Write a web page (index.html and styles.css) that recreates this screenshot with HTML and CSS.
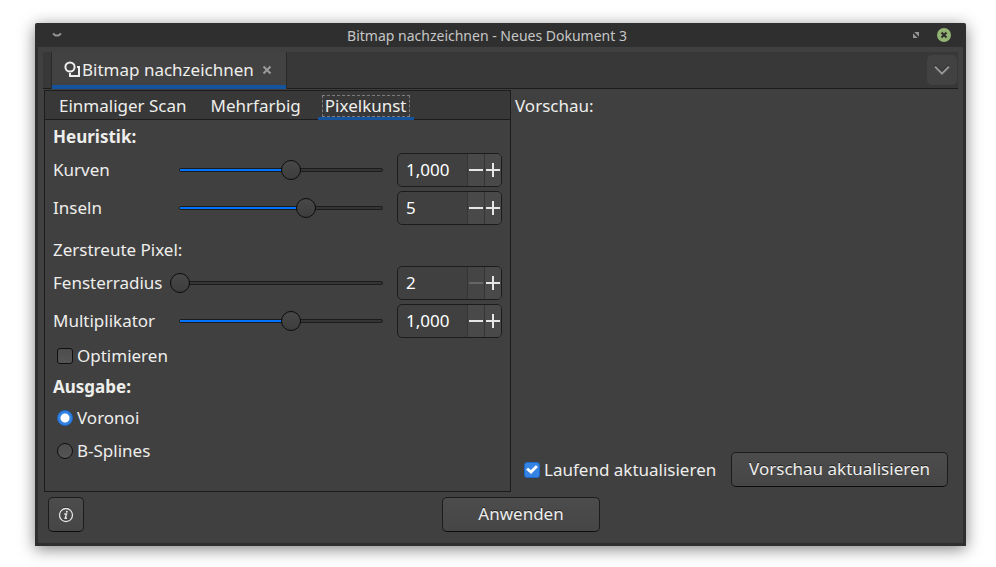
FILE: index.html
```html
<!DOCTYPE html>
<html lang="de">
<head>
<meta charset="utf-8">
<meta name="viewport" content="width=device-width, initial-scale=1">
<title>Bitmap nachzeichnen - Neues Dokument 3</title>
<link rel="stylesheet" href="styles.css">
</head>
<body>
<div class="window">
  <header class="titlebar">
    <button class="title-button" type="button" aria-label="Fenstermenü">
      <svg width="10" height="14" viewBox="0 0 10 14"><path d="M1 5.500L3.500 7.500H6.500L9 5.500" fill="none" stroke="#959595" stroke-width="2"/></svg>
    </button>
    <h1 class="title">Bitmap nachzeichnen - Neues Dokument 3</h1>
    <button class="title-button" type="button" aria-label="Maximieren">
      <svg width="8" height="14" viewBox="0 0 8 14"><path d="M2 4H7V9ZM1 5V10H6Z" fill="#959595"/><path d="M1 4L7 10" stroke="#2f2f2f" stroke-width="1.500"/></svg>
    </button>
    <button class="title-button" type="button" aria-label="Schließen">
      <svg width="14" height="14" viewBox="0 0 14 14"><circle cx="7" cy="7" r="7" fill="#92b372"/><path d="M4.5 4.5l5 5M9.5 4.5l-5 5" stroke="#2d2d2d" stroke-width="2"/></svg>
    </button>
  </header>

  <div class="body">
    <nav class="dock-tabs">
      <div class="dock-tab">
        <svg width="18" height="18" viewBox="0 0 18 18" fill="none" stroke="#eee" stroke-width="2"><circle cx="6" cy="6" r="4.600"/><path d="M13 6H15V15H6V12"/></svg>
        <span>Bitmap nachzeichnen</span>
        <button class="tab-close" type="button" aria-label="Reiter schließen">
          <svg width="10" height="10" viewBox="0 0 10 10"><path d="M1.500 1.500l7 7M8.500 1.500l-7 7" stroke="#9b9b9b" stroke-width="2"/></svg>
        </button>
      </div>
      <button class="dock-menu" type="button" aria-label="Dialogmenü">
        <svg width="16" height="10" viewBox="0 0 16 10"><path d="M1 1.500l7 7 7-7" fill="none" stroke="#222" stroke-width="2" transform="translate(0 -1)"/><path d="M1 1.500l7 7 7-7" fill="none" stroke="#959595" stroke-width="2"/></svg>
      </button>
    </nav>

    <main class="main">
      <section class="panel">
        <div class="modes">
          <button class="mode" type="button"><span>Einmaliger Scan</span></button>
          <button class="mode" type="button"><span>Mehrfarbig</span></button>
          <button class="mode active" type="button"><span>Pixelkunst</span></button>
        </div>
        <form class="form">
          <h2 class="heading">Heuristik:</h2>
          <div class="rows">
            <label for="curves">Kurven</label>
            <span class="slider"><span class="track"><span class="fill" style="width:55%"></span></span><input type="range" aria-label="Kurven" min="0" max="1000" value="547"></span>
            <span class="spin"><input id="curves" type="text" value="1,000"><button class="minus" type="button" aria-label="Weniger"></button><button class="plus" type="button" aria-label="Mehr"></button></span>
            <label for="islands">Inseln</label>
            <span class="slider"><span class="track"><span class="fill" style="width:62%"></span></span><input type="range" aria-label="Inseln" min="0" max="1000" value="620"></span>
            <span class="spin"><input id="islands" type="text" value="5"><button class="minus" type="button" aria-label="Weniger"></button><button class="plus" type="button" aria-label="Mehr"></button></span>
          </div>
          <h2 class="heading light">Zerstreute Pixel:</h2>
          <div class="rows">
            <label for="radius">Fensterradius</label>
            <span class="slider"><span class="track"><span class="fill" style="width:0%"></span></span><input type="range" aria-label="Fensterradius" min="0" max="1000" value="0"></span>
            <span class="spin"><input id="radius" type="text" value="2"><button class="minus" type="button" aria-label="Weniger" disabled></button><button class="plus" type="button" aria-label="Mehr"></button></span>
            <label for="multiplier">Multiplikator</label>
            <span class="slider"><span class="track"><span class="fill" style="width:55%"></span></span><input type="range" aria-label="Multiplikator" min="0" max="1000" value="547"></span>
            <span class="spin"><input id="multiplier" type="text" value="1,000"><button class="minus" type="button" aria-label="Weniger"></button><button class="plus" type="button" aria-label="Mehr"></button></span>
          </div>
          <div class="options">
            <label class="choice"><input type="checkbox">Optimieren</label>
            <h2 class="heading">Ausgabe:</h2>
            <label class="choice"><input type="radio" name="output" checked>Voronoi</label>
            <label class="choice"><input type="radio" name="output">B-Splines</label>
          </div>
        </form>
      </section>

      <section class="preview">
        <h2 class="heading light">Vorschau:</h2>
        <div class="preview-actions">
          <label class="choice"><input type="checkbox" checked>Laufend aktualisieren</label>
          <button class="button" type="button">Vorschau aktualisieren</button>
        </div>
      </section>
    </main>

    <footer class="footer">
      <button class="button info" type="button" aria-label="Hilfe">
        <svg width="16" height="16" viewBox="0 0 16 16" fill="none" stroke="#e6e6e6"><circle cx="8" cy="7" r="6.500" stroke="#222"/><circle cx="8" cy="8" r="6.500" stroke-width="1.300"/><path d="M6.300 7H8.500L7.200 11.200H9" stroke-width="1.400"/><circle cx="8.800" cy="4.700" r="1" fill="#e6e6e6" stroke="none"/></svg>
      </button>
      <div class="apply"><button class="button" type="button">Anwenden</button></div>
    </footer>
  </div>
</div>
</body>
</html>
```

FILE: styles.css
```css
* {
  box-sizing: border-box;
}

body {
  margin: 0;
  min-height: 100vh;
  display: flex;
  padding: 23px 30px 21px 35px;
  background: #fff;
  color: #eeeeec;
  font: 17px/24px "Noto Sans", sans-serif;
}

button,
input {
  margin: 0;
  padding: 0;
  border: 0;
  background: none;
  color: inherit;
  font: inherit;
}

svg {
  display: block;
}

.window {
  flex: 1;
  display: flex;
  flex-direction: column;
  border: solid #2f2f2f;
  border-width: 0 3px 3px;
  border-radius: 2px 2px 0 0;
  background: #404040;
  box-shadow: 0 3px 16px rgba(0, 0, 0, 0.5);
}

.titlebar {
  display: flex;
  align-items: center;
  height: 24px;
  padding: 0 12px 0 14px;
  background: #2f2f2f;
}

.title {
  flex: 1;
  margin: 0;
  color: #c6c6c6;
  font-size: 14px;
  line-height: 22px;
  padding-top: 2px;
  font-weight: 400;
  text-align: center;
}

.title-button + .title-button {
  margin-left: 17px;
}

.body {
  flex: 1;
  display: flex;
  flex-direction: column;
  padding: 5px 5px 11px;
}

.dock-tabs {
  display: flex;
  align-items: stretch;
  justify-content: space-between;
  height: 37px;
  margin-bottom: 1px;
  padding-left: 8px;
  border-bottom: 1px solid #1c1c1c;
  background: #383838;
}

.dock-tab {
  display: flex;
  align-items: center;
  margin-bottom: -1px;
  padding: 0 14px 2px 12px;
  border: solid #2a2a2a;
  border-width: 0 1px;
  background: #424242;
  box-shadow: inset 0 -4px #15539e;
}

.tab-close {
  margin-left: 8px;
}

.dock-menu {
  display: grid;
  place-items: center;
  align-self: center;
  width: 30px;
  height: 30px;
  margin-right: 1px;
  border-radius: 5px;
  background: #424242;
}

.main {
  flex: 1;
  display: grid;
  grid-template-columns: 468fr 447fr;
}

.panel {
  margin-left: 1px;
  border: 1px solid #1c1c1c;
}

.modes {
  display: flex;
  gap: 10px;
  height: 29px;
  padding: 0 7px;
  border-bottom: 1px solid #1c1c1c;
  background: #383838;
}

.mode {
  margin-bottom: -1px;
  padding: 0 4px;
}

.mode span {
  display: block;
  padding: 0 3px;
  line-height: 22px;
}

.mode.active {
  box-shadow: inset 0 -3px #15539e;
}

.mode.active span {
  outline: 1px dashed #7c7c7c;
  outline-offset: -1px;
}

.form {
  padding: 5px 8px;
}

.heading {
  margin: 0;
  font-size: 17px;
  font-weight: 700;
}

.heading.light {
  font-weight: 400;
}

.rows {
  display: grid;
  grid-template-columns: 113px 1fr 105px;
  gap: 4px;
  align-items: center;
  margin-top: 4px;
}

.rows + .heading {
  margin-top: 13px;
}

.slider {
  display: grid;
  align-items: center;
}

.slider > * {
  grid-area: 1 / 1;
}

.track {
  height: 4px;
  margin: 0 10px 0 9px;
  border: 1px solid #1c1c1c;
  border-radius: 2px;
  background: #353535;
}

.fill {
  display: block;
  height: 2px;
  background: #0073ff;
}

.slider input {
  appearance: none;
  width: 100%;
  height: 20px;
}

.slider input::-webkit-slider-thumb {
  appearance: none;
  width: 20px;
  height: 20px;
  border: 1px solid #0c0c0c;
  border-radius: 50%;
  background: linear-gradient(#484848, #3d3d3d);
}

.spin {
  display: grid;
  grid-template-columns: 1fr 17px 17px;
  height: 34px;
  overflow: hidden;
  border: 1px solid #1c1c1c;
  border-radius: 5px;
  background: #404040;
}

.spin input {
  width: 100%;
  min-width: 0;
  padding-left: 8px;
  color: #fff;
}

.spin button {
  border-left: 1px solid #353535;
  background: linear-gradient(#e6e6e6, #e6e6e6) center / 14px 2px no-repeat, #494949;
}

.spin .plus {
  background: linear-gradient(#e6e6e6, #e6e6e6) center / 14px 2px no-repeat, linear-gradient(#e6e6e6, #e6e6e6) center / 2px 14px no-repeat, #494949;
}

.spin .minus:disabled {
  background: linear-gradient(#666, #666) center / 14px 2px no-repeat, #454545;
}

.options {
  display: grid;
  gap: 7px;
  margin-top: 6px;
}

.choice {
  display: flex;
  align-items: center;
  gap: 4px;
}

.choice + .choice {
  margin-top: 2px;
}

.options .choice {
  margin-left: 4px;
}

.choice input {
  appearance: none;
  width: 16px;
  height: 16px;
  border: 1px solid #101010;
  border-radius: 3px;
  background: linear-gradient(#4d4d4d, #555);
}

.choice input[type="radio"] {
  border-radius: 50%;
}

.choice input:checked {
  border-color: #1b6acb;
  background: #3584e4;
}

.choice input[type="radio"]:checked {
  background: radial-gradient(circle, #fff 4px, #3584e4 5px);
}

.choice input[type="checkbox"]:checked {
  display: grid;
  place-items: center;
}

.choice input[type="checkbox"]:checked::before {
  content: "";
  width: 12px;
  height: 10px;
  background: #fff;
  clip-path: polygon(0 50%, 18% 32%, 40% 56%, 82% 8%, 100% 26%, 42% 94%);
}

.preview {
  display: flex;
  flex-direction: column;
  justify-content: space-between;
  padding: 4px 10px 5px 4px;
}

.preview-actions {
  display: flex;
  align-items: center;
  justify-content: space-between;
  padding-left: 9px;
}

.button {
  height: 35px;
  padding: 0 17px 2px;
  border: 1px solid #1c1c1c;
  border-bottom-color: #0c0c0c;
  border-radius: 5px;
  background: linear-gradient(#4c4c4c, #464646);
  text-shadow: 0 -1px #222;
}

.footer {
  display: flex;
  margin-top: 5px;
  padding-left: 5px;
}

.info {
  display: grid;
  place-items: center;
  width: 36px;
  padding: 0;
}

.apply {
  flex: 1;
  display: flex;
  justify-content: center;
}

.apply .button {
  min-width: 158px;
}
```
